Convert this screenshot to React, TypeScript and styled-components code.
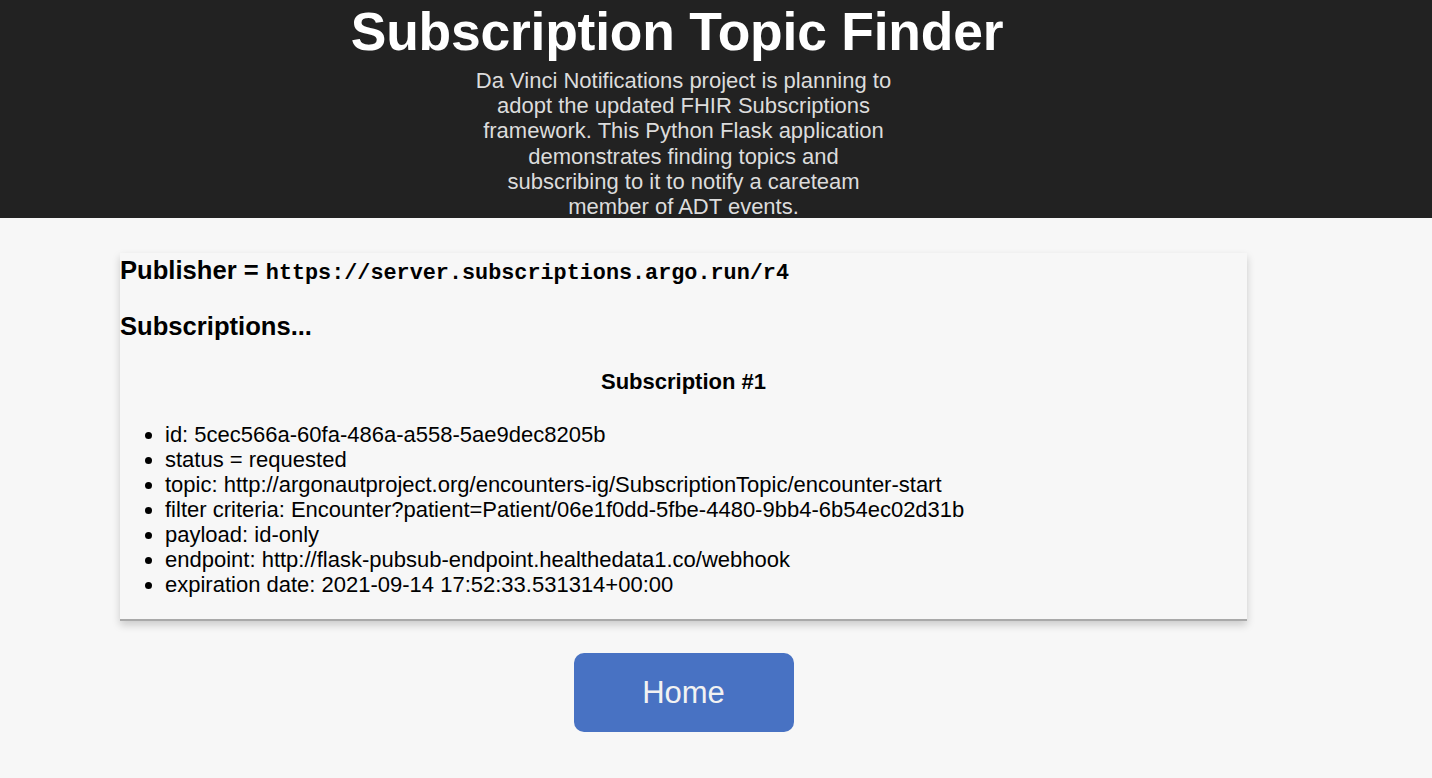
import { FC } from "react"
import styled, { createGlobalStyle } from "styled-components"

const subscription = {
	id: "5cec566a-60fa-486a-a558-5ae9dec8205b",
	status: "requested",
	topic: "http://argonautproject.org/encounters-ig/SubscriptionTopic/encounter-start",
	criteria: "Encounter?patient=Patient/06e1f0dd-5fbe-4480-9bb4-6b54ec02d31b",
	payload: "id-only",
	endpoint: "http://flask-pubsub-endpoint.healthedata1.co/webhook",
	expiration: "2021-09-14 17:52:33.531314+00:00",
}

const App: FC = () => {
	return (
		<>
			<GlobalStyle />
			<Header>
				<Inner>
					<Title>Subscription Topic Finder</Title>
					<Intro>
						Da Vinci Notifications project is planning to adopt the updated FHIR Subscriptions
						framework. This Python Flask application demonstrates finding topics and
						subscribing to it to notify a careteam member of ADT events.
					</Intro>
				</Inner>
			</Header>

			<Inner>
				<Card>
					<Publisher>
						Publisher = <code>https://server.subscriptions.argo.run/r4</code>
					</Publisher>
					<SectionTitle>Subscriptions...</SectionTitle>
					<SubTitle>Subscription #1</SubTitle>
					<Details>
						<li>id: {subscription.id}</li>
						<li>status = {subscription.status}</li>
						<li>topic: {subscription.topic}</li>
						<li>filter criteria: {subscription.criteria}</li>
						<li>payload: {subscription.payload}</li>
						<li>endpoint: {subscription.endpoint}</li>
						<li>expiration date: {subscription.expiration}</li>
					</Details>
				</Card>

				<Actions>
					<HomeButton onClick={() => alert("Home")}>Home</HomeButton>
				</Actions>
			</Inner>
		</>
	)
}

const GlobalStyle = createGlobalStyle`
	html, body {
		margin: 0;
		background: #f7f7f7;
		font-family: "Liberation Sans", Arial, Helvetica, sans-serif;
		color: #000;
	}
`

const Header = styled.header`
	/* Layout */
	height: 218px;
	padding-top: 3px;
	box-sizing: border-box;

	/* Color */
	background: #222222;
`

const Inner = styled.div`
	/* Layout */
	width: 1127px;
	margin-left: 120px;
	display: flex;
	flex-direction: column;
	align-items: center;
`

const Title = styled.h1`
	margin: 0;
	padding-right: 13px;
	color: #ffffff;
	font-size: 53.4px;
	font-weight: bold;
	line-height: 58px;
	letter-spacing: -0.2px;
`

const Intro = styled.p`
	margin: 7px 0 0 0;
	width: 422px;
	text-align: center;
	color: #dcdcdc;
	font-size: 22px;
	line-height: 25.2px;
`

const Card = styled.section`
	/* Layout */
	align-self: stretch;
	margin-top: 35px;
	padding: 3px 0 22px 0;

	/* Color */
	background: #f7f7f7;

	/* Border */
	border-bottom: 2px solid #a9a9a9;

	/* Shadow */
	box-shadow: 0px 4px 8px rgba(0, 0, 0, 0.18);
`

const Publisher = styled.h2`
	margin: 0;
	font-size: 25.6px;
	font-weight: bold;
	line-height: 28px;

	code {
		font-family: "Liberation Mono", "Courier New", monospace;
		font-size: 21.8px;
		font-weight: bold;
	}
`

const SectionTitle = styled.h2`
	margin: 24px 0 0 0;
	font-size: 25.6px;
	font-weight: bold;
	line-height: 28px;
`

const SubTitle = styled.h3`
	margin: 30px 0 0 0;
	text-align: center;
	font-size: 22px;
	font-weight: bold;
	line-height: 24px;
`

const Details = styled.ul`
	margin: 28px 0 0 0;
	padding-left: 45px;
	font-size: 22px;
	line-height: 25px;
`

const Actions = styled.div`
	/* Layout */
	display: flex;
	justify-content: center;
	margin-top: 32px;
`

const HomeButton = styled.button`
	/* Layout */
	width: 220px;
	height: 79px;

	/* Color */
	background: #4872c3;
	color: #f2f2f2;

	/* Text */
	font-family: "Liberation Sans", Arial, sans-serif;
	font-size: 31px;

	/* Border */
	border: none;
	border-radius: 10px;

	/* User interaction */
	cursor: pointer;
`

export default App
